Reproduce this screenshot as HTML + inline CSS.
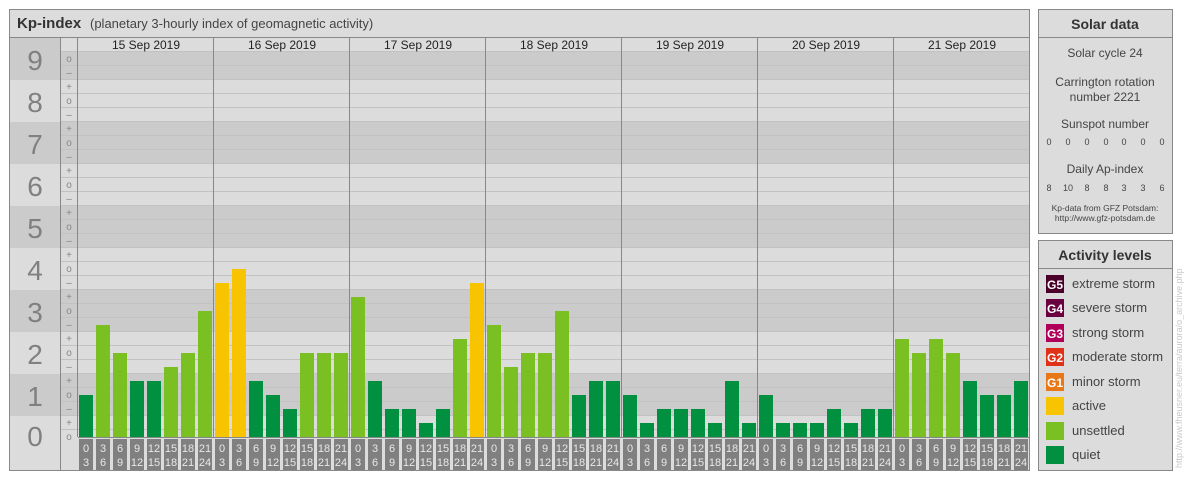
<!DOCTYPE html>
<html><head><meta charset="utf-8"><style>
html,body{margin:0;padding:0;background:#fff;width:1184px;height:480px;overflow:hidden}
svg{display:block;font-family:"Liberation Sans",sans-serif}
</style></head><body>
<svg width="1184" height="480" viewBox="0 0 1184 480" xmlns="http://www.w3.org/2000/svg">
<!-- main panel -->
<rect x="9.5" y="9.5" width="1020" height="461" fill="#dcdcdc" stroke="#888"/>
<line x1="10" y1="37.5" x2="1029" y2="37.5" stroke="#888"/>
<text x="17" y="28" font-size="15" font-weight="bold" fill="#333">Kp-index</text>
<text x="90" y="28" font-size="13" fill="#444">(planetary 3-hourly index of geomagnetic activity)</text>
<!-- bands -->
<g fill="#cbcbcb">
<rect x="10" y="38" width="50" height="42"/><rect x="60" y="51" width="969" height="29"/>
<rect x="10" y="122" width="1019" height="42"/>
<rect x="10" y="206" width="1019" height="42"/>
<rect x="10" y="290" width="1019" height="42"/>
<rect x="10" y="374" width="1019" height="42"/>
</g>
<g stroke="#c2c2c2" stroke-width="1">
<path d="M60 51.5H1029M60 65.5H1029M60 79.5H1029M60 93.5H1029M60 107.5H1029M60 121.5H1029M60 135.5H1029M60 149.5H1029M60 163.5H1029M60 177.5H1029M60 191.5H1029M60 205.5H1029M60 219.5H1029M60 233.5H1029M60 247.5H1029M60 261.5H1029M60 275.5H1029M60 289.5H1029M60 303.5H1029M60 317.5H1029M60 331.5H1029M60 345.5H1029M60 359.5H1029M60 373.5H1029M60 387.5H1029M60 401.5H1029M60 415.5H1029M60 429.5H1029"/>
</g>
<g stroke="#888"><path d="M60.5 38V471M77.5 38V437M213.5 38V437M349.5 38V437M485.5 38V437M621.5 38V437M757.5 38V437M893.5 38V437M78 437.5H1029"/></g>
<!-- numbers -->
<g font-size="28" fill="#808080" text-anchor="middle">
<text x="35" y="70">9</text><text x="35" y="112">8</text><text x="35" y="154">7</text><text x="35" y="196">6</text><text x="35" y="238">5</text><text x="35" y="280">4</text><text x="35" y="322">3</text><text x="35" y="364">2</text><text x="35" y="406">1</text><text x="35" y="446">0</text>
</g>
<g font-size="10" fill="#888" text-anchor="middle">
<text x="69" y="62">o</text><text x="69" y="76">–</text>
<text x="69" y="90">+</text><text x="69" y="104">o</text><text x="69" y="118">–</text>
<text x="69" y="132">+</text><text x="69" y="146">o</text><text x="69" y="160">–</text>
<text x="69" y="174">+</text><text x="69" y="188">o</text><text x="69" y="202">–</text>
<text x="69" y="216">+</text><text x="69" y="230">o</text><text x="69" y="244">–</text>
<text x="69" y="258">+</text><text x="69" y="272">o</text><text x="69" y="286">–</text>
<text x="69" y="300">+</text><text x="69" y="314">o</text><text x="69" y="328">–</text>
<text x="69" y="342">+</text><text x="69" y="356">o</text><text x="69" y="370">–</text>
<text x="69" y="384">+</text><text x="69" y="398">o</text><text x="69" y="412">–</text>
<text x="69" y="426">+</text><text x="69" y="440">o</text>
</g>
<!-- dates -->
<g font-size="12" fill="#222" text-anchor="middle">
<text x="146" y="49">15 Sep 2019</text><text x="282" y="49">16 Sep 2019</text><text x="418" y="49">17 Sep 2019</text><text x="554" y="49">18 Sep 2019</text><text x="690" y="49">19 Sep 2019</text><text x="826" y="49">20 Sep 2019</text><text x="962" y="49">21 Sep 2019</text>
</g>
<!-- bars -->
<g>
<rect x="79" y="395" width="14" height="42" fill="#009040"/>
<rect x="96" y="325" width="14" height="112" fill="#7ac022"/>
<rect x="113" y="353" width="14" height="84" fill="#7ac022"/>
<rect x="130" y="381" width="14" height="56" fill="#009040"/>
<rect x="147" y="381" width="14" height="56" fill="#009040"/>
<rect x="164" y="367" width="14" height="70" fill="#7ac022"/>
<rect x="181" y="353" width="14" height="84" fill="#7ac022"/>
<rect x="198" y="311" width="14" height="126" fill="#7ac022"/>

<rect x="215" y="283" width="14" height="154" fill="#f8c400"/>
<rect x="232" y="269" width="14" height="168" fill="#f8c400"/>
<rect x="249" y="381" width="14" height="56" fill="#009040"/>
<rect x="266" y="395" width="14" height="42" fill="#009040"/>
<rect x="283" y="409" width="14" height="28" fill="#009040"/>
<rect x="300" y="353" width="14" height="84" fill="#7ac022"/>
<rect x="317" y="353" width="14" height="84" fill="#7ac022"/>
<rect x="334" y="353" width="14" height="84" fill="#7ac022"/>

<rect x="351" y="297" width="14" height="140" fill="#7ac022"/>
<rect x="368" y="381" width="14" height="56" fill="#009040"/>
<rect x="385" y="409" width="14" height="28" fill="#009040"/>
<rect x="402" y="409" width="14" height="28" fill="#009040"/>
<rect x="419" y="423" width="14" height="14" fill="#009040"/>
<rect x="436" y="409" width="14" height="28" fill="#009040"/>
<rect x="453" y="339" width="14" height="98" fill="#7ac022"/>
<rect x="470" y="283" width="14" height="154" fill="#f8c400"/>

<rect x="487" y="325" width="14" height="112" fill="#7ac022"/>
<rect x="504" y="367" width="14" height="70" fill="#7ac022"/>
<rect x="521" y="353" width="14" height="84" fill="#7ac022"/>
<rect x="538" y="353" width="14" height="84" fill="#7ac022"/>
<rect x="555" y="311" width="14" height="126" fill="#7ac022"/>
<rect x="572" y="395" width="14" height="42" fill="#009040"/>
<rect x="589" y="381" width="14" height="56" fill="#009040"/>
<rect x="606" y="381" width="14" height="56" fill="#009040"/>

<rect x="623" y="395" width="14" height="42" fill="#009040"/>
<rect x="640" y="423" width="14" height="14" fill="#009040"/>
<rect x="657" y="409" width="14" height="28" fill="#009040"/>
<rect x="674" y="409" width="14" height="28" fill="#009040"/>
<rect x="691" y="409" width="14" height="28" fill="#009040"/>
<rect x="708" y="423" width="14" height="14" fill="#009040"/>
<rect x="725" y="381" width="14" height="56" fill="#009040"/>
<rect x="742" y="423" width="14" height="14" fill="#009040"/>

<rect x="759" y="395" width="14" height="42" fill="#009040"/>
<rect x="776" y="423" width="14" height="14" fill="#009040"/>
<rect x="793" y="423" width="14" height="14" fill="#009040"/>
<rect x="810" y="423" width="14" height="14" fill="#009040"/>
<rect x="827" y="409" width="14" height="28" fill="#009040"/>
<rect x="844" y="423" width="14" height="14" fill="#009040"/>
<rect x="861" y="409" width="14" height="28" fill="#009040"/>
<rect x="878" y="409" width="14" height="28" fill="#009040"/>

<rect x="895" y="339" width="14" height="98" fill="#7ac022"/>
<rect x="912" y="353" width="14" height="84" fill="#7ac022"/>
<rect x="929" y="339" width="14" height="98" fill="#7ac022"/>
<rect x="946" y="353" width="14" height="84" fill="#7ac022"/>
<rect x="963" y="381" width="14" height="56" fill="#009040"/>
<rect x="980" y="395" width="14" height="42" fill="#009040"/>
<rect x="997" y="395" width="14" height="42" fill="#009040"/>
<rect x="1014" y="381" width="14" height="56" fill="#009040"/>
</g>
<!-- time label boxes -->
<g fill="#808080">
<path d="M79 439h14v31h-14zM96 439h14v31h-14zM113 439h14v31h-14zM130 439h14v31h-14zM147 439h14v31h-14zM164 439h14v31h-14zM181 439h14v31h-14zM198 439h14v31h-14z"/>
<path transform="translate(136 0)" d="M79 439h14v31h-14zM96 439h14v31h-14zM113 439h14v31h-14zM130 439h14v31h-14zM147 439h14v31h-14zM164 439h14v31h-14zM181 439h14v31h-14zM198 439h14v31h-14z"/>
<path transform="translate(272 0)" d="M79 439h14v31h-14zM96 439h14v31h-14zM113 439h14v31h-14zM130 439h14v31h-14zM147 439h14v31h-14zM164 439h14v31h-14zM181 439h14v31h-14zM198 439h14v31h-14z"/>
<path transform="translate(408 0)" d="M79 439h14v31h-14zM96 439h14v31h-14zM113 439h14v31h-14zM130 439h14v31h-14zM147 439h14v31h-14zM164 439h14v31h-14zM181 439h14v31h-14zM198 439h14v31h-14z"/>
<path transform="translate(544 0)" d="M79 439h14v31h-14zM96 439h14v31h-14zM113 439h14v31h-14zM130 439h14v31h-14zM147 439h14v31h-14zM164 439h14v31h-14zM181 439h14v31h-14zM198 439h14v31h-14z"/>
<path transform="translate(680 0)" d="M79 439h14v31h-14zM96 439h14v31h-14zM113 439h14v31h-14zM130 439h14v31h-14zM147 439h14v31h-14zM164 439h14v31h-14zM181 439h14v31h-14zM198 439h14v31h-14z"/>
<path transform="translate(816 0)" d="M79 439h14v31h-14zM96 439h14v31h-14zM113 439h14v31h-14zM130 439h14v31h-14zM147 439h14v31h-14zM164 439h14v31h-14zM181 439h14v31h-14zM198 439h14v31h-14z"/>
</g>
<g font-size="11" fill="#e8e8e8" text-anchor="middle">
<g><text x="86" y="452">0</text><text x="86" y="466">3</text><text x="103" y="452">3</text><text x="103" y="466">6</text><text x="120" y="452">6</text><text x="120" y="466">9</text><text x="137" y="452">9</text><text x="137" y="466">12</text><text x="154" y="452">12</text><text x="154" y="466">15</text><text x="171" y="452">15</text><text x="171" y="466">18</text><text x="188" y="452">18</text><text x="188" y="466">21</text><text x="205" y="452">21</text><text x="205" y="466">24</text></g>
<g transform="translate(136 0)"><text x="86" y="452">0</text><text x="86" y="466">3</text><text x="103" y="452">3</text><text x="103" y="466">6</text><text x="120" y="452">6</text><text x="120" y="466">9</text><text x="137" y="452">9</text><text x="137" y="466">12</text><text x="154" y="452">12</text><text x="154" y="466">15</text><text x="171" y="452">15</text><text x="171" y="466">18</text><text x="188" y="452">18</text><text x="188" y="466">21</text><text x="205" y="452">21</text><text x="205" y="466">24</text></g>
<g transform="translate(272 0)"><text x="86" y="452">0</text><text x="86" y="466">3</text><text x="103" y="452">3</text><text x="103" y="466">6</text><text x="120" y="452">6</text><text x="120" y="466">9</text><text x="137" y="452">9</text><text x="137" y="466">12</text><text x="154" y="452">12</text><text x="154" y="466">15</text><text x="171" y="452">15</text><text x="171" y="466">18</text><text x="188" y="452">18</text><text x="188" y="466">21</text><text x="205" y="452">21</text><text x="205" y="466">24</text></g>
<g transform="translate(408 0)"><text x="86" y="452">0</text><text x="86" y="466">3</text><text x="103" y="452">3</text><text x="103" y="466">6</text><text x="120" y="452">6</text><text x="120" y="466">9</text><text x="137" y="452">9</text><text x="137" y="466">12</text><text x="154" y="452">12</text><text x="154" y="466">15</text><text x="171" y="452">15</text><text x="171" y="466">18</text><text x="188" y="452">18</text><text x="188" y="466">21</text><text x="205" y="452">21</text><text x="205" y="466">24</text></g>
<g transform="translate(544 0)"><text x="86" y="452">0</text><text x="86" y="466">3</text><text x="103" y="452">3</text><text x="103" y="466">6</text><text x="120" y="452">6</text><text x="120" y="466">9</text><text x="137" y="452">9</text><text x="137" y="466">12</text><text x="154" y="452">12</text><text x="154" y="466">15</text><text x="171" y="452">15</text><text x="171" y="466">18</text><text x="188" y="452">18</text><text x="188" y="466">21</text><text x="205" y="452">21</text><text x="205" y="466">24</text></g>
<g transform="translate(680 0)"><text x="86" y="452">0</text><text x="86" y="466">3</text><text x="103" y="452">3</text><text x="103" y="466">6</text><text x="120" y="452">6</text><text x="120" y="466">9</text><text x="137" y="452">9</text><text x="137" y="466">12</text><text x="154" y="452">12</text><text x="154" y="466">15</text><text x="171" y="452">15</text><text x="171" y="466">18</text><text x="188" y="452">18</text><text x="188" y="466">21</text><text x="205" y="452">21</text><text x="205" y="466">24</text></g>
<g transform="translate(816 0)"><text x="86" y="452">0</text><text x="86" y="466">3</text><text x="103" y="452">3</text><text x="103" y="466">6</text><text x="120" y="452">6</text><text x="120" y="466">9</text><text x="137" y="452">9</text><text x="137" y="466">12</text><text x="154" y="452">12</text><text x="154" y="466">15</text><text x="171" y="452">15</text><text x="171" y="466">18</text><text x="188" y="452">18</text><text x="188" y="466">21</text><text x="205" y="452">21</text><text x="205" y="466">24</text></g>
</g>

<!-- Solar data -->
<rect x="1038.5" y="9.5" width="134" height="224" fill="#dcdcdc" stroke="#888"/>
<line x1="1039" y1="37.5" x2="1172" y2="37.5" stroke="#888"/>
<g text-anchor="middle" fill="#444">
<text x="1105" y="29" font-size="14" font-weight="bold" fill="#333">Solar data</text>
<text x="1105" y="57" font-size="12">Solar cycle 24</text>
<text x="1105" y="86" font-size="12">Carrington rotation</text>
<text x="1105" y="101" font-size="12">number 2221</text>
<text x="1105" y="128" font-size="12">Sunspot number</text>
<g font-size="9"><text x="1049" y="145">0</text><text x="1068" y="145">0</text><text x="1087" y="145">0</text><text x="1106" y="145">0</text><text x="1124" y="145">0</text><text x="1143" y="145">0</text><text x="1162" y="145">0</text></g>
<text x="1105" y="173" font-size="12">Daily Ap-index</text>
<g font-size="9"><text x="1049" y="191">8</text><text x="1068" y="191">10</text><text x="1087" y="191">8</text><text x="1106" y="191">8</text><text x="1124" y="191">3</text><text x="1143" y="191">3</text><text x="1162" y="191">6</text></g>
<text x="1105" y="211" font-size="8.5">Kp-data from GFZ Potsdam:</text>
<text x="1105" y="221" font-size="8.5">http://www.gfz-potsdam.de</text>
</g>

<!-- Activity levels -->
<rect x="1038.5" y="240.5" width="134" height="230" fill="#dcdcdc" stroke="#888"/>
<line x1="1039" y1="268.5" x2="1172" y2="268.5" stroke="#888"/>
<text x="1105" y="260" font-size="14" font-weight="bold" fill="#333" text-anchor="middle">Activity levels</text>
<rect x="1046" y="275" width="18" height="18" fill="#4a0028"/>
<rect x="1046" y="299" width="18" height="18" fill="#6a0040"/>
<rect x="1046" y="324" width="18" height="18" fill="#b0005a"/>
<rect x="1046" y="348" width="18" height="18" fill="#e03018"/>
<rect x="1046" y="373" width="18" height="18" fill="#e87818"/>
<rect x="1046" y="397" width="18" height="18" fill="#f8c400"/>
<rect x="1046" y="422" width="18" height="18" fill="#7ac022"/>
<rect x="1046" y="446" width="18" height="18" fill="#009040"/>
<g font-size="12" font-weight="bold" fill="#fff" text-anchor="middle">
<text x="1055" y="289">G5</text><text x="1055" y="313">G4</text><text x="1055" y="338">G3</text><text x="1055" y="362">G2</text><text x="1055" y="387">G1</text>
</g>
<g font-size="13" fill="#444">
<text x="1072" y="288">extreme storm</text>
<text x="1072" y="312">severe storm</text>
<text x="1072" y="337">strong storm</text>
<text x="1072" y="361">moderate storm</text>
<text x="1072" y="386">minor storm</text>
<text x="1072" y="410">active</text>
<text x="1072" y="435">unsettled</text>
<text x="1072" y="459">quiet</text>
</g>
<text transform="translate(1182 468) rotate(-90)" font-size="9" fill="#c8c8c8">http://www.fheusner.eu/terra/aurora/o_archive.php</text>
</svg>
</body></html>
